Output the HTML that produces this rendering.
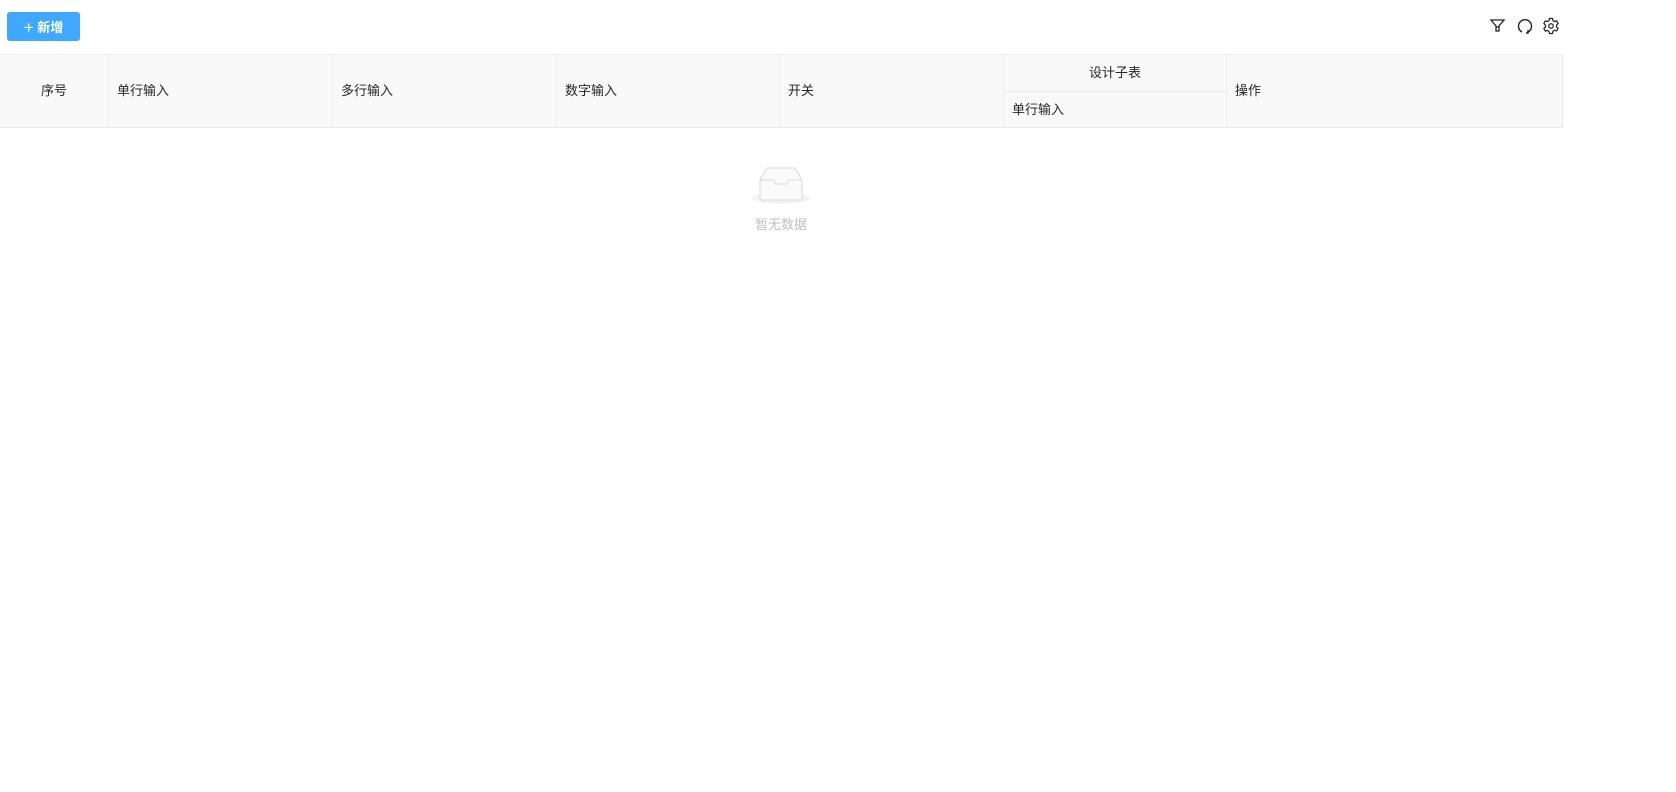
<!DOCTYPE html>
<html><head><meta charset="utf-8"><style>
*{box-sizing:border-box;margin:0;padding:0}
body{width:1676px;height:792px;background:#fff;font-family:"Liberation Sans","Noto Sans CJK SC",sans-serif;font-size:13px;color:#262626;position:relative;overflow:hidden}
.btn{position:absolute;left:7px;top:12px;width:73px;height:29px;background:#40a9ff;border-radius:3px;color:#fff;font-size:13px;font-weight:bold;line-height:29px;text-align:center}
.hd{position:absolute;top:54px;left:0;width:1563px;height:74px;background:#f9f9f9;border-top:1px solid #eee;border-bottom:1px solid #eaeaea;border-right:1px solid #eaeaea}
.c{position:absolute;border-right:1px solid #eee;height:100%;top:0;line-height:72px;padding-left:8px}
.ic{position:absolute;top:17px}
</style></head><body>
<div class="btn"><span style="font-size:17px;font-weight:normal;position:relative;top:1px">+</span> 新增</div>
<svg class="ic" style="left:1489px" width="17" height="17" viewBox="0 0 17 17" fill="none" stroke="#222" stroke-width="1.3"><path d="M2 3h13l-5 6v5H7V9z"/><path d="M7 10h3"/></svg>
<svg class="ic" style="left:1516px" width="18" height="18" viewBox="0 0 18 18" fill="none" stroke="#222" stroke-width="1.4"><path d="M6 15A6.5 6.5 0 1 1 12 15"/><path d="M12 13v3h-2"/></svg>
<svg class="ic" style="left:1542px" width="18" height="18" viewBox="0 0 24 24" fill="none" stroke="#222" stroke-width="1.6"><circle cx="12" cy="12" r="3"/><path d="M10 2h4l.6 2.8 2.2 1.3 2.7-.9 2 3.5-2.1 1.9v2.6l2.1 1.9-2 3.5-2.7-.9-2.2 1.3L14 22h-4l-.6-2.8-2.2-1.3-2.7.9-2-3.5 2.1-1.9v-2.6L2.5 8.7l2-3.5 2.7.9 2.2-1.3z"/></svg>
<div class="hd">
<div class="c" style="left:0;width:109px;text-align:center;padding:0">序号</div>
<div class="c" style="left:109px;width:224px">单行输入</div>
<div class="c" style="left:333px;width:224px">多行输入</div>
<div class="c" style="left:557px;width:223px">数字输入</div>
<div class="c" style="left:780px;width:224px">开关</div>
<div class="c" style="left:1004px;width:223px;padding:0">
<div style="height:37px;line-height:36px;text-align:center;border-bottom:1px solid #eaeaea">设计子表</div>
<div style="line-height:36px;padding-left:8px">单行输入</div></div>
<div class="c" style="left:1227px;width:335px;border:none">操作</div>
</div>
<svg style="position:absolute;left:750px;top:166px" width="62" height="40" viewBox="0 0 62 40"><ellipse cx="31" cy="32" rx="29" ry="6" fill="#f3f3f3"/><path d="M10 14l7-12h28l7 12v18a2 2 0 0 1-2 2H12a2 2 0 0 1-2-2z" fill="#fafafa" stroke="#d9d9d9"/><path d="M10 14h12a3 3 0 0 1 3 3v1h12v-1a3 3 0 0 1 3-3h12" fill="none" stroke="#d9d9d9"/></svg>
<div style="position:absolute;left:731px;top:214px;width:100px;text-align:center;color:#bfbfbf;font-size:13px">暂无数据</div>
</body></html>
